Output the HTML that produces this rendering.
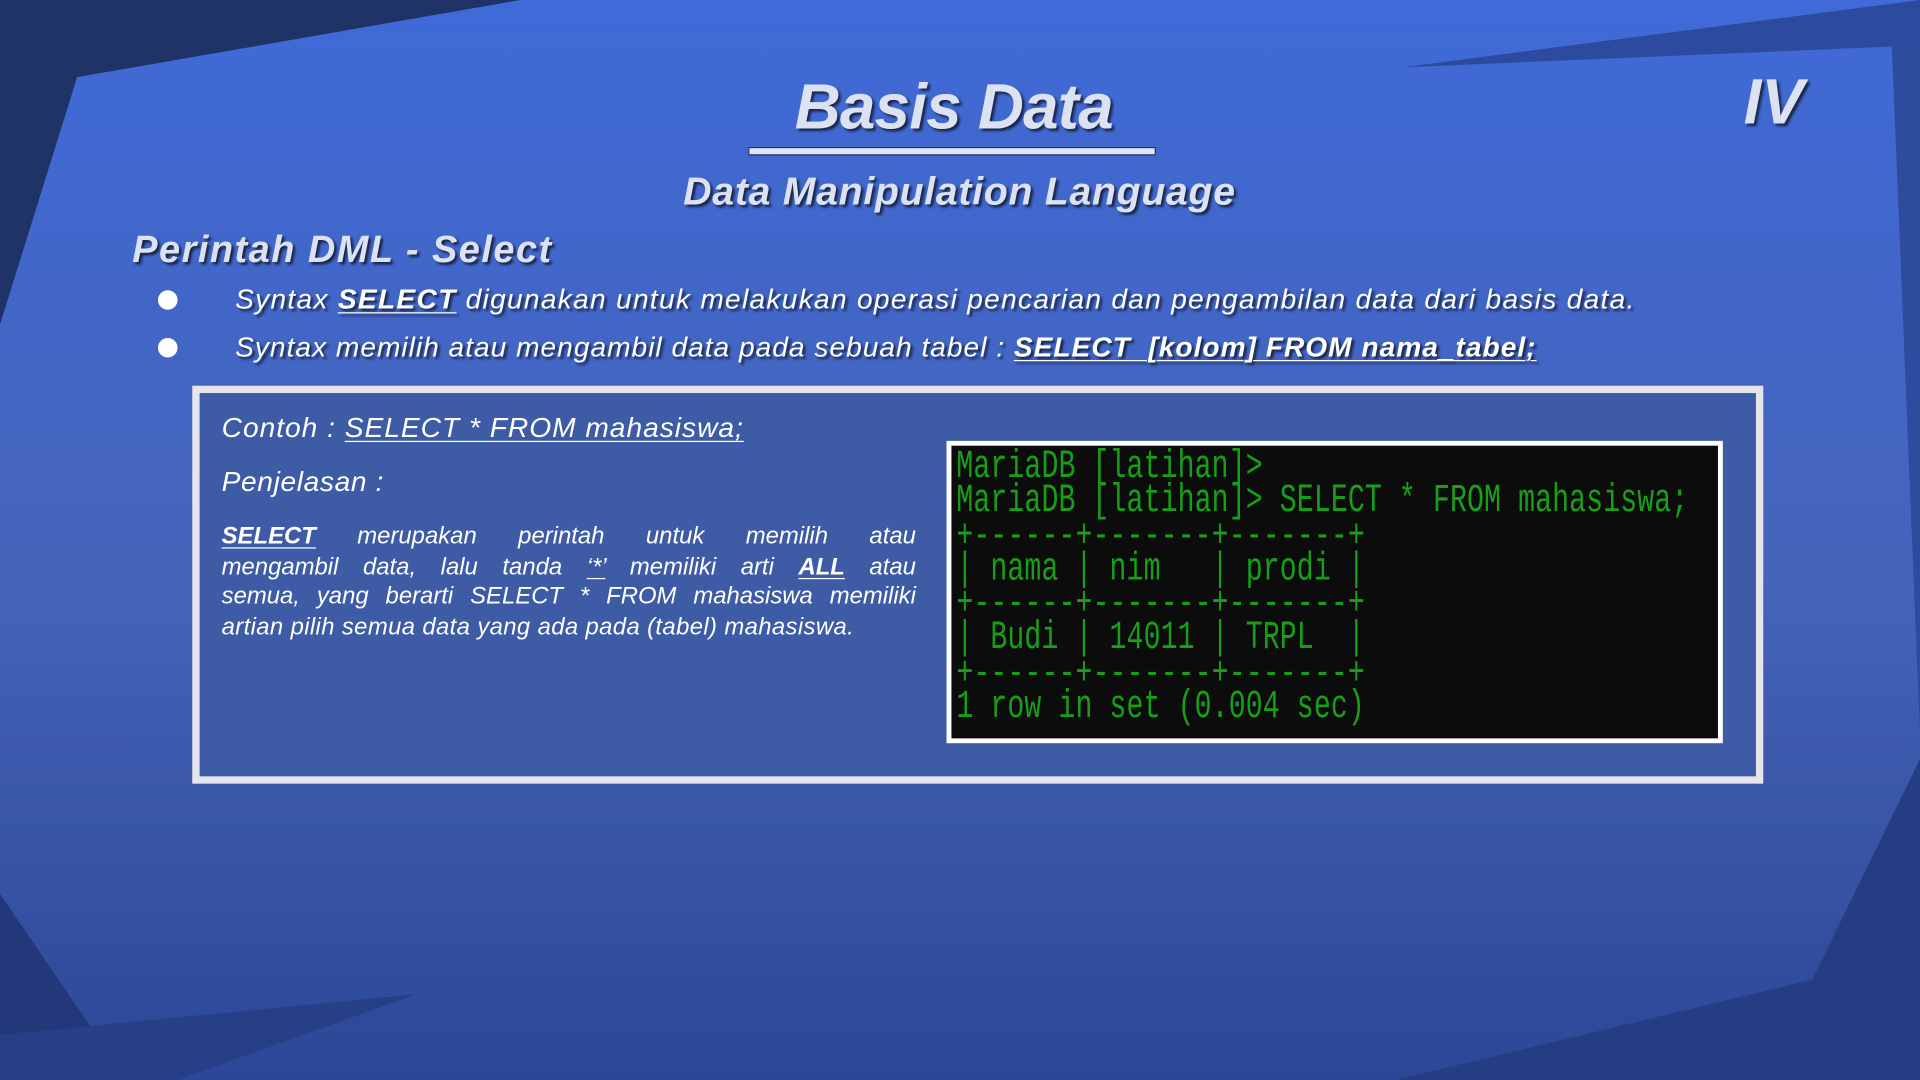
<!DOCTYPE html>
<html><head><meta charset="utf-8"><style>
html,body{margin:0;padding:0;width:1920px;height:1080px;overflow:hidden;background:#3a5fc4}
#s{position:absolute;left:0;top:0;width:1568px;height:882px;transform:scale(1.22449);transform-origin:0 0;font-family:"Liberation Sans",sans-serif;font-style:italic;color:#fff}
.a{position:absolute;white-space:nowrap}
.sh{text-shadow:2px 2px 2px rgba(0,0,0,.65);color:#dde2f3}
u{text-decoration:underline;text-underline-offset:3px;text-decoration-thickness:1px}
.t{position:absolute;left:4px;font-family:"Liberation Mono",monospace;font-style:normal;font-size:23px;letter-spacing:0.1px;color:#17a017;white-space:pre;transform:scaleY(1.4);transform-origin:0 50%;line-height:24px}
.j{text-align:justify;text-align-last:justify;white-space:nowrap;height:24.5px}
</style></head><body>
<div id="s">
<svg width="1568" height="882" style="position:absolute;left:0;top:0">
<defs><linearGradient id="g" x1="0" y1="0" x2="0" y2="1"><stop offset="0" stop-color="#3f6ad8"/><stop offset="0.55" stop-color="#4563b8"/><stop offset="1" stop-color="#2b4796"/></linearGradient></defs>
<rect width="1568" height="882" fill="url(#g)"/>
<polygon points="0,0 425,0 63,63 0,265" fill="#1f3366"/>
<polygon points="1145,55 1568,0 1568,40 1545,38" fill="#2c4a9e"/>
<polygon points="1545,38 1568,36 1568,600" fill="#2d4c9e"/>
<polygon points="1480,800 1568,620 1568,882 1140,882" fill="#253d82"/>
<polygon points="0,730 75,840 105,882 0,882" fill="#22387a"/>
<polygon points="0,845 340,812 145,882 0,882" fill="#263f86"/>
</svg>
<div class="a sh" style="left:649px;top:58px;font-size:52px;font-weight:bold;letter-spacing:-0.6px">Basis Data</div>
<div class="a" style="left:611px;top:120px;width:331px;height:5px;background:#e0e4f4;border:1px solid #1d2f66;box-sizing:content-box"></div>
<div class="a" style="left:1424px;top:54px;font-size:52px;font-weight:bold" ><span class="sh">IV</span></div>
<div class="a sh" style="left:558px;top:138px;font-size:32px;font-weight:bold;letter-spacing:0.6px">Data Manipulation Language</div>
<div class="a sh" style="left:108px;top:186px;font-size:31px;font-weight:bold;letter-spacing:1.2px">Perintah DML - Select</div>
<div class="a" style="left:129px;top:237px;width:16px;height:16px;border-radius:50%;background:#fff"></div>
<div class="a" style="left:129px;top:276px;width:16px;height:16px;border-radius:50%;background:#fff"></div>
<div class="a sh" style="left:192px;top:231px;font-size:23px;letter-spacing:1.03px;color:#fff">Syntax <b><u>SELECT</u></b> digunakan untuk melakukan operasi pencarian dan pengambilan data dari basis data.</div>
<div class="a sh" style="left:192px;top:270px;font-size:23px;letter-spacing:0.8px;color:#fff">Syntax memilih atau mengambil data pada sebuah tabel : <b><u>SELECT&nbsp; [kolom] FROM nama_tabel;</u></b></div>
<div class="a" style="left:157px;top:315px;width:1271px;height:313px;border:6px solid #e6e4ec;background:#3e5ba5"></div>
<div class="a" style="left:181px;top:336px;font-size:23px;letter-spacing:0.8px">Contoh : <u>SELECT * FROM mahasiswa;</u></div>
<div class="a" style="left:181px;top:380px;font-size:23px;letter-spacing:0.5px">Penjelasan :</div>
<div class="a" style="left:181px;top:426px;width:567px;font-size:19.5px;line-height:24.5px;white-space:normal">
<div class="j"><b><u>SELECT</u></b> merupakan perintah untuk memilih atau</div>
<div class="j">mengambil data, lalu tanda <u>‘*’</u> memiliki arti <b><u>ALL</u></b> atau</div>
<div class="j">semua, yang berarti SELECT * FROM mahasiswa memiliki</div>
<div style="white-space:nowrap;letter-spacing:0.3px">artian pilih semua data yang ada pada (tabel) mahasiswa.</div>
</div>
<div class="a" style="left:773px;top:360px;width:626px;height:239px;border:4px solid #fff;background:#0c0c0c;overflow:hidden">
<div class="t" style="top:5px">MariaDB [latihan]&gt;</div>
<div class="t" style="top:33px">MariaDB [latihan]&gt; SELECT * FROM mahasiswa;</div>
<div class="t" style="top:62px">+------+-------+-------+</div>
<div class="t" style="top:89px">| nama | nim   | prodi |</div>
<div class="t" style="top:117px">+------+-------+-------+</div>
<div class="t" style="top:145px">| Budi | 14011 | TRPL  |</div>
<div class="t" style="top:174px">+------+-------+-------+</div>
<div class="t" style="top:201px">1 row in set (0.004 sec)</div>
</div>
</div>
</body></html>
